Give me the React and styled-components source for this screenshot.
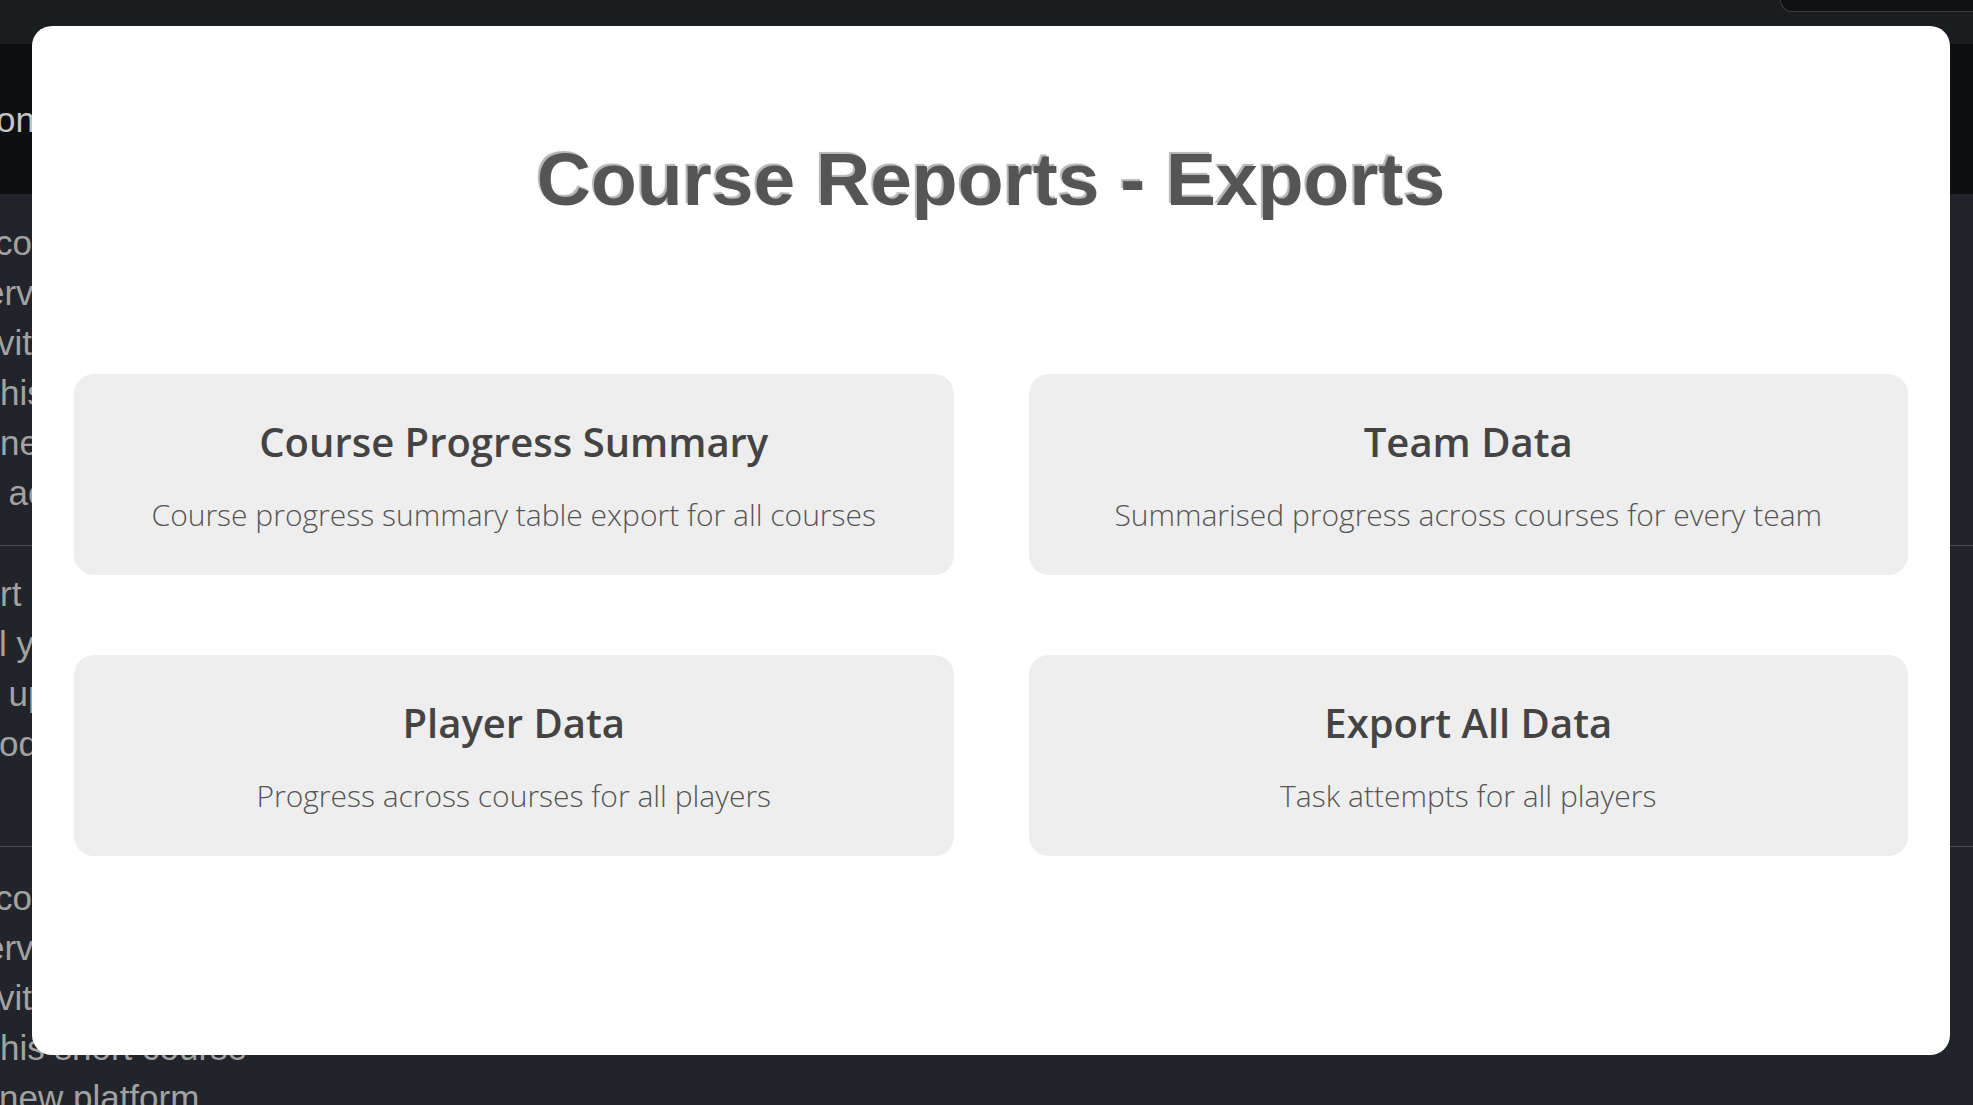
import React from 'react'
import styled, { createGlobalStyle } from 'styled-components'

const GlobalStyle = createGlobalStyle`
    html, body {
        margin: 0;
        padding: 0;
        background: #21242b;
        overflow: hidden;
    }
    * {
        box-sizing: border-box;
    }
`

const Page = styled.div`
    position: relative;
    width: 1973px;
    height: 1105px;
    overflow: hidden;
    font-family: "Liberation Sans", Arial, sans-serif;
`

const TopBar = styled.div`
    height: 44px;
    background: #1b1c20;
    display: flex;
    justify-content: flex-end;
    align-items: flex-start;
`

const SearchStub = styled.div`
    width: 205px;
    height: 12px;
    margin-right: -12px;
    background: #0e1014;
    border: 1px solid #3c3e44;
    border-top: none;
    border-radius: 0 0 0 14px;
`

const Nav = styled.div`
    height: 150px;
    background: #0e0f11;
    display: flex;
    align-items: center;
    padding-top: 2px;
    color: #c4c4c4;
    font-size: 35px;
`

const NavLabel = styled.span`
    margin-left: -4px;
`

const Section = styled.div`
    padding: ${p => p.top}px 0 ${p => p.bottom}px;
    border-bottom: ${p => (p.last ? 'none' : '1px solid #4b4e55')};
`

const Line = styled.div`
    height: 50px;
    line-height: 50px;
    font-size: 35px;
    color: #a2a2a2;
    white-space: pre;
    margin-left: ${p => p.shift || 0}px;
`

const Modal = styled.div`
    position: absolute;
    left: 32px;
    top: 26px;
    width: 1918px;
    height: 1029px;
    background: #ffffff;
    border-radius: 20px;
    padding: 116px 42px 0 42px;
`

const Title = styled.h1`
    margin: 0;
    text-align: center;
    font-family: "Liberation Sans", Arial, sans-serif;
    font-weight: 700;
    font-size: 75px;
    line-height: 75px;
    color: #555555;
    text-shadow: -2px -2px 1px #b4b4b4;
`

const Grid = styled.div`
    margin-top: 157px;
    display: grid;
    grid-template-columns: 1fr 1fr;
    column-gap: 75px;
    row-gap: 80px;
`

const Card = styled.div`
    height: 201px;
    background: #eeeeee;
    border-radius: 20px;
    padding-top: 44px;
    text-align: center;
    font-family: "Open Sans", "Noto Sans", sans-serif;
    cursor: pointer;
`

const CardTitle = styled.div`
    font-size: 40px;
    line-height: 48px;
    font-weight: 600;
    color: #444444;
`

const CardText = styled.div`
    margin-top: 31px;
    font-size: 30px;
    line-height: 36px;
    font-weight: 300;
    color: #555555;
`

const reports = [
    { title: 'Course Progress Summary', text: 'Course progress summary table export for all courses' },
    { title: 'Team Data', text: 'Summarised progress across courses for every team' },
    { title: 'Player Data', text: 'Progress across courses for all players' },
    { title: 'Export All Data', text: 'Task attempts for all players' },
]

// left edge of the page behind the dialog, cut off by the window
const intro = [
    { t: 'course', shift: -5 },
    { t: 'erv', shift: -15 },
    { t: 'vities', shift: -3 },
    { t: 'his' },
    { t: 'ne' },
    { t: 'l ac', shift: -9 },
]

const sections = [
    { top: 24, bottom: 27, lines: intro },
    { top: 23, bottom: 77, lines: [{ t: 'rt' }, { t: 'l y', shift: -1 }, { t: 'l up', shift: -9 }, { t: 'od', shift: -1 }] },
    {
        top: 26,
        bottom: 0,
        last: true,
        lines: [...intro.slice(0, 3), { t: 'his short course' }, { t: 'new platform', shift: -1 }],
    },
]

export default function App() {
    return (
        <Page>
            <GlobalStyle />
            <TopBar>
                <SearchStub />
            </TopBar>
            <Nav>
                <NavLabel>on</NavLabel>
            </Nav>
            {sections.map((s, i) => (
                <Section key={i} top={s.top} bottom={s.bottom} last={s.last}>
                    {s.lines.map((l, j) => <Line key={j} shift={l.shift}>{l.t}</Line>)}
                </Section>
            ))}
            <Modal>
                <Title>Course Reports - Exports</Title>
                <Grid>
                    {reports.map(r => (
                        <Card key={r.title}>
                            <CardTitle>{r.title}</CardTitle>
                            <CardText>{r.text}</CardText>
                        </Card>
                    ))}
                </Grid>
            </Modal>
        </Page>
    )
}
